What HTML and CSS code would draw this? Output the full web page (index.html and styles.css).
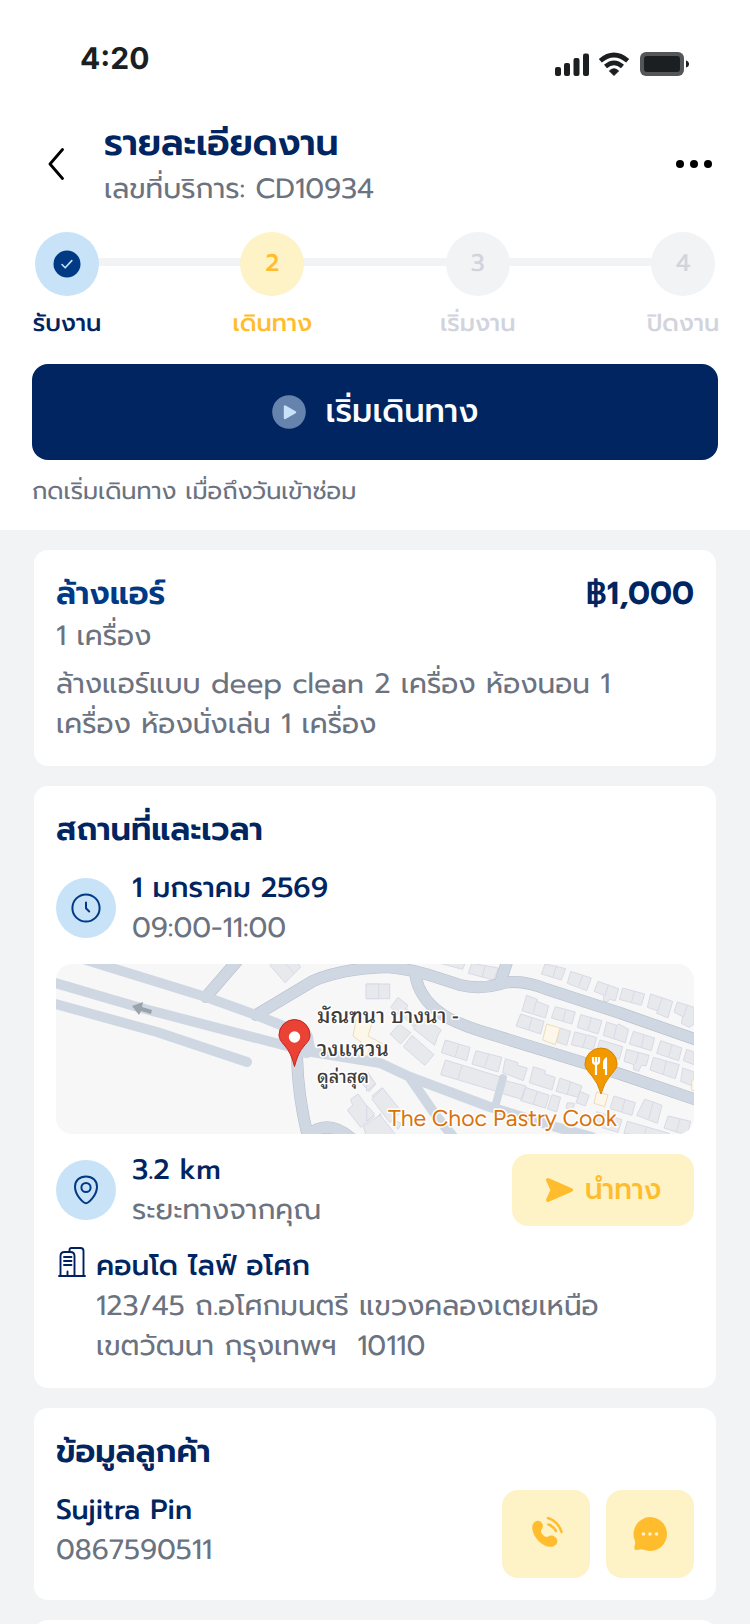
FILE: index.html
```html
<!DOCTYPE html>
<html lang="th">
<head>
<meta charset="utf-8">
<meta name="viewport" content="width=device-width, initial-scale=1">
<title>รายละเอียดงาน</title>
<link rel="stylesheet" href="styles.css">
</head>
<body>
<div class="top">
  <div class="status">
    <span class="time">4:20</span>
    <svg class="status-icons" viewBox="0 0 136 28" aria-hidden="true">
      <g fill="#1b1f21">
        <rect x="1" y="15" width="6" height="9" rx="2"/><rect x="10" y="11" width="6" height="13" rx="2"/>
        <rect x="19.500" y="6" width="6" height="18" rx="2"/><rect x="29" y="1.500" width="6" height="22.500" rx="2"/>
        <path d="M54.500 24l-4.600-4.600q4.600-4.200 9.200 0z" stroke="#1b1f21" stroke-linejoin="round" transform="translate(5.500 -.5)"/>
      </g>
      <g fill="none" stroke="#1b1f21" stroke-width="4.600">
        <path d="M46.300 8.800q13.700-11.600 27.400 0" stroke-linejoin="round"/><path d="M51.500 14.500q8.500-7.200 17 0"/>
      </g>
      <rect x="86" y="0" width="44" height="24" rx="6" fill="#545759"/>
      <rect x="90" y="4" width="36" height="16" rx="3" fill="#1b1f21"/>
      <path d="M132 8.500q3 1 3 3.500t-3 3.500z" fill="#1b1f21"/>
    </svg>
  </div>

  <header class="header">
    <button class="icon-button" aria-label="ย้อนกลับ">
      <svg width="16" height="32" viewBox="0 0 16 32" fill="none" stroke="#000" stroke-width="2.800" stroke-linecap="round" stroke-linejoin="round"><path d="M14.500 1.500L2 16l12.500 14.500"/></svg>
    </button>
    <div class="heading">
      <h1>รายละเอียดงาน</h1>
      <p class="muted">เลขที่บริการ: CD10934</p>
    </div>
    <button class="icon-button" aria-label="เพิ่มเติม">
      <svg width="36" height="8" viewBox="0 0 36 8"><circle cx="4" cy="4" r="4"/><circle cx="18" cy="4" r="4"/><circle cx="32" cy="4" r="4"/></svg>
    </button>
  </header>

  <ol class="steps">
    <li class="step done">
      <span class="dot"><svg width="28" height="28" viewBox="0 0 28 28"><circle cx="14" cy="14" r="13.500" fill="#003a85"/><path d="M9 14.500l3.200 3.300 6.600-7.200" fill="none" stroke="#c8e2f8" stroke-width="1.600" stroke-linecap="round" stroke-linejoin="round"/></svg></span>
      <span class="label">รับงาน</span>
    </li>
    <li class="step current"><span class="dot">2</span><span class="label">เดินทาง</span></li>
    <li class="step"><span class="dot">3</span><span class="label">เริ่มงาน</span></li>
    <li class="step"><span class="dot">4</span><span class="label">ปิดงาน</span></li>
  </ol>

  <button class="primary">
    <svg width="34" height="34" viewBox="0 0 34 34"><circle cx="17" cy="17" r="16.800" fill="#6683ae"/><path d="M13 11.500v11.500l10-5.750z" fill="#c8e2f8" stroke="#c8e2f8" stroke-width="2.400" stroke-linejoin="round"/></svg>
    <span>เริ่มเดินทาง</span>
  </button>
  <p class="hint">กดเริ่มเดินทาง เมื่อถึงวันเข้าซ่อม</p>
</div>

<main class="cards">
  <section class="card">
    <div class="split">
      <h2 class="service">ล้างแอร์</h2>
      <span class="price">฿1,000</span>
    </div>
    <p class="muted">1 เครื่อง</p>
    <p class="muted detail">ล้างแอร์แบบ deep clean 2 เครื่อง ห้องนอน 1<br>เครื่อง ห้องนั่งเล่น 1 เครื่อง</p>
  </section>

  <section class="card stack">
    <h2>สถานที่และเวลา</h2>
    <div class="row">
      <span class="badge"><svg width="30" height="30" viewBox="0 0 30 30" fill="none" stroke="#003a85" stroke-width="2" stroke-linecap="round" stroke-linejoin="round"><circle cx="15" cy="15" r="13.600"/><path d="M15 9.500v5.700l3.200 3.300"/></svg></span>
      <div class="grow"><p class="strong">1 มกราคม 2569</p><p class="muted">09:00-11:00</p></div>
    </div>

    <svg class="map" viewBox="0 0 638 170" preserveAspectRatio="xMidYMid slice" role="img" aria-label="แผนที่">
      <rect width="638" height="170" fill="#f7f7f7"/>
      <g fill="#e8e9ed" stroke="#d8d9e6" stroke-width="3">
        <g transform="translate(-16 -14) scale(.33333)">
          <path d="M690 46l45 52 47-46-14-20h-66zM735 40l27 30M980 102h38v44h-38zM985 368l22 35-20 22-25-30zM932 448l22-16 50 68-42 32-40-52 16-14zM996 438l30-25v60zM982 530l40-40v70h-30z"/>
        </g>
        <g transform="translate(314 -14) scale(.33333)">
          <path d="M-12 102h71v44h-71zM26 102v44M210 40l68 18 8-20zM305 40l80 14-14 36-76-20zM345 48l-8 32"/>
          <path d="M525 42l62 14-13 34-60-18zM560 46l-11 35M602 64l62 20-14 38-58-22zM638 76l-12 32M684 94l62 22-10 36-18-4-6 8-12-4 2-16-30-12zM715 104l-10 34M758 114l66 18-10 34-66-18zM794 124l-10 34M842 132l66 22-14 50-34-14 2-8-30-10zM877 143l-14 40M922 156l50 16v50l-14 10-24-12 4-20-26-14zM952 166l-12 36"/>
          <path d="M470 136l32 12-2 6 36 14-10 36-70-22zM500 150l-10 38M556 170l60 16-10 36-62-18zM588 178l-10 36M632 194l64 18-12 40-62-20zM664 204l-10 36M710 216l30 10 6-4 30 16-10 40-66-22zM740 226l-8 38M790 244l64 20-10 38-66-20zM822 256l-8 38M872 272l64 22-10 38-66-22zM906 284l-10 36M950 298l22 8v38l-32-12z"/>
          <path d="M452 192l70 22-10 38-74-24zM486 204l-10 36M570 234l32 10-12 42-30-10zM614 246l66 16-10 38-66-16zM648 258l-10 36M690 270l68 20-10 38-70-22zM770 298l68 18-10 32-14-2-8 18-16-6 2-14-30-10zM806 308l-10 34M850 322l78 22-12 42-76-26zM888 334l-8 40M938 354l34 12v44l-40-16z"/>
          <path d="M84 142l30 24-20 34-32-28zM110 176l40 32-20 22-30-30zM158 200l56 40-10 16-10 30-64-50zM88 222l34 26-30 34-32-30zM126 256l66 58-28 32-64-56zM226 270l74 22-10 40-76-24zM266 284l-10 34M318 302l78 20-12 44-78-24zM356 314l-12 36M406 326l38 12-2 8 30 8-12 38-62-24z"/>
          <path d="M226 330l170 52-10 44-174-52zM276 346l-12 42M406 392l62 16-12 40-62-18zM466 412l72 24-12 38-74-22zM502 424l-12 38M546 434l26 8-12 44-28-10zM490 350l36 12-2 10 32 10-10 38-68-22zM570 384l66 24-12 34-66-18zM602 396l-10 36M630 424l28 12-12 32-28-10zM592 458l22 2-6 18-20-4z"/>
          <path d="M732 438l64 20-10 38-66-20zM765 448l-10 38M824 448l26 8 26 10-14 54-62-24zM850 456l-14 50M894 498l68 16-10 42-70-22zM930 508l-10 36M772 514l126 36-6 20-130-20zM830 532l-8 24M680 485l76 24-12 38-70-20zM38 414l56 70-34 34-54-70zM-10 370l26 30-26 24zM-20 530l50-35 48 60h-90zM-10 466l24 26-24 22zM70 510l24 10-10 18z"/>
          <g fill="#fdf7ea" stroke="#ecdcbc"><path d="M530 222l40 12-14 50-38-14zM680 426l34 8-10 36-32-10zM965 390h12v34l-12-4z"/></g>
        </g>
        <path d="M300 56l-3 16 8 6-6 16 10 4 5-15 12 6 3-8-17-9 4-13z" fill="#fdf7ea" stroke="#ecdcbc" stroke-width="1"/>
      </g>
      <g fill="none" stroke-linecap="round" stroke-linejoin="round">
        <path stroke="#b9bfcb" d="M150 33L181-3M200 51l57-34Q284 5 330 3C360 5 385 15 404 21Q424 26 444 20T490 25L564 49l80 28M444 19l8-24M359 9Q363 38 394 55Q410 63 431 69L561 109l80 27M241 93q1 40 11 80M251 172q20-18 44 2" stroke-width="12"/>
        <g stroke="#cfd8e2">
          <path d="M150 33L181-3M200 51l57-34Q284 5 330 3C360 5 385 15 404 21Q424 26 444 20T490 25L564 49l80 28M444 19l8-24M359 9Q363 38 394 55Q410 63 431 69L561 109l80 27M241 93q1 40 11 80M251 172q20-18 44 2" stroke-width="10.800"/>
          <path d="M30-4L150 33l50 18 50 20M-4 18L85 44l165 43 74 12 30 14 80 30 66 20 36 10M-4 39l105 29 90 30M354 114l27 39 18 22" stroke-width="10"/>
          <path d="M439 143l8-29" stroke-width="8"/>
          <path d="M248 73l2 12" stroke-width="18"/>
        </g>
      </g>
      <path d="M76 42l11-4-1 5 10 3-1 4-10-3-2 4z" fill="#9aa2aa"/>
      <path d="M238.500 102.500q-3.500-14-9.500-20.500c-4.500-5-6-8-6-11a15.500 15.500 0 0 1 31 0c0 4-1.500 6-6 11q-6 6.500-9.500 20.500z" fill="#ea4335" stroke="#c5221f"/>
      <circle cx="238.500" cy="73" r="5.700" fill="#fff"/>
      <path d="M545 130q-3-11-9-18c-5-6-7-8-7-12a16 16 0 0 1 32 0c0 4-2 6-7 12q-6 7-9 18z" fill="#f29900" stroke="#d98200"/>
      <path d="M537 93v4q0 3 3 3t3-3v-4M540 93v18M550 111V94" fill="none" stroke="#fff" stroke-width="2.200"/><path d="M551 93v12h-4v-7q1-4 4-5z" fill="#fff"/>
      <g class="map-text">
        <text x="261" y="59">มัณฑนา บางนา -</text>
        <text x="261" y="92">วงแหวน</text>
        <text class="map-small" x="261" y="119">ดูล่าสุด</text>
        <text class="map-shop" x="332" y="162">The Choc Pastry Cook</text>
      </g>
    </svg>

    <div class="row">
      <span class="badge"><svg width="26" height="30" viewBox="0 0 26 30" fill="none" stroke="#003a85" stroke-width="2"><path d="M13 28.300c-2.500 0-11-8-11-16.500C2 5.500 6.500 1.500 13 1.500s11 4 11 10.300c0 8.500-8.500 16.500-11 16.500z"/><circle cx="13" cy="12.500" r="4.600"/></svg></span>
      <div class="grow"><p class="strong">3.2 km</p><p class="muted">ระยะทางจากคุณ</p></div>
      <button class="soft navigate">
        <svg width="28" height="26" viewBox="0 0 28 26"><path d="M3 3l23 10L3 23l4.500-10z" fill="#ffbd2e" stroke="#ffbd2e" stroke-width="4" stroke-linejoin="round"/></svg>
        <span>นำทาง</span>
      </button>
    </div>

    <div class="address">
      <svg width="30" height="32" viewBox="0 0 30 32" fill="none" stroke="#00205f" stroke-width="1.900" stroke-linecap="round" stroke-linejoin="round"><path d="M3 30h26M4.500 30V10q0-4 4-4h6q4 0 4 4v20M13.500 6V4q0-2 2-2h9q3 0 3 3v25M11.500 30v-4.500M8 11h7.500M8 15h7.500M8 19h7.500"/></svg>
      <div class="grow"><p class="strong">คอนโด ไลฟ์ อโศก</p><p class="muted">123/45 ถ.อโศกมนตรี แขวงคลองเตยเหนือ<br>เขตวัฒนา กรุงเทพฯ&nbsp; 10110</p></div>
    </div>
  </section>

  <section class="card stack">
    <h2>ข้อมูลลูกค้า</h2>
    <div class="contact">
      <div class="grow"><p class="strong">Sujitra Pin</p><p class="muted">0867590511</p></div>
      <button class="soft square" aria-label="โทร">
        <svg width="34" height="34" viewBox="0 0 34 34"><path d="M4 7c3-5 8-3.500 9.500 0 1.500 4-1.500 5-1.500 7.500 0 2 3.500 5.500 5.500 5.500 2 0 3.500-2.500 7-1 4.500 2 5 6.500 2 9-4.500 4-12 1-16.500-3.500C5.500 20 1.500 12 4 7z" fill="#ffbd2e"/><path d="M19 1c6 1.500 11.500 7 13.500 14M19.500 7.500q4.500 1.500 7.500 6.500" fill="none" stroke="#ffbd2e" stroke-width="2.500" stroke-linecap="round"/></svg>
      </button>
      <button class="soft square" aria-label="แชท">
        <svg width="34" height="34" viewBox="0 0 34 34"><path d="M17 0a17 17 0 1 1-7 32.500q-2-.5-5 .3c-3 .7-4-.5-3.600-3l.8-3.500q.3-1-.5-3A17 17 0 0 1 17 0z" fill="#ffbd2e"/><g fill="#fef2c7"><circle cx="10.500" cy="17" r="1.800"/><circle cx="17" cy="17" r="1.800"/><circle cx="23.500" cy="17" r="1.800"/></g></svg>
      </button>
    </div>
  </section>
  <section class="card stub"></section>
</main>
</body>
</html>
```
FILE: styles.css
```css
* { box-sizing: border-box; }
html { height: 100%; overflow: hidden; background: #f2f3f5; }
body {
  margin: 0;
  height: 100%;
  overflow: hidden;
  color: #002561;
  font-family: Prompt, "Noto Sans", "Noto Sans Thai", sans-serif;
  font-size: 28px;
  line-height: 40px;
  text-rendering: geometricPrecision;
}
h1, h2, p, ol { margin: 0; padding: 0; }
button { border: 0; margin: 0; padding: 0; font: inherit; color: inherit; background: none; cursor: pointer; }
svg { display: block; flex: none; }

.top { background: #fff; padding: 0 32px 18px; }
.status { display: flex; justify-content: space-between; align-items: flex-start; height: 120px; padding: 39px 28px 0 48px; }
.time { font-family: Inter, sans-serif; font-weight: 700; font-size: 30px; color: #1b1f21; }
.status-icons { width: 136px; height: 28px; margin-top: 13px; }

.header { display: flex; align-items: center; gap: 24px; height: 88px; }
.icon-button { display: grid; place-items: center; min-width: 48px; height: 48px; }
.icon-button:last-child { min-width: 36px; margin-right: 6px; }
.heading { flex: 1; }
h1 { font-size: 36px; font-weight: 600; line-height: 50px; }
.muted { color: #6b7280; }
.strong { font-weight: 500; }

.steps {
  display: flex; justify-content: space-between;
  list-style: none; height: 132px; padding-top: 24px;
  background: linear-gradient(#f2f3f5, #f2f3f5) center 50px / calc(100% - 72px) 8px no-repeat;
}
.step { display: flex; flex-direction: column; align-items: center; gap: 8px; width: 70px; font-size: 24px; font-weight: 500; color: #d2d4dd; white-space: nowrap; }
.dot { display: grid; place-items: center; flex: none; width: 64px; height: 64px; border-radius: 50%; background: #f2f3f5; }
.done { color: #002561; }
.done .dot { background: #c8e2f8; }
.current { color: #ffbd2e; }
.current .dot { background: #fef2c7; }

.primary {
  display: flex; align-items: center; justify-content: center; gap: 20px;
  width: 100%; height: 96px; margin-top: 24px;
  border-radius: 16px; background: #002561; color: #fff;
  font-size: 32px; font-weight: 500;
}
.hint { margin-top: 12px; font-size: 24px; line-height: 40px; color: #6b7280; }

.cards { display: flex; flex-direction: column; gap: 20px; padding: 20px 34px 0; }
.card { padding: 22px; border-radius: 14px; background: #fff; }
.stub { height: 80px; flex: none; }
.stack { display: flex; flex-direction: column; gap: 16px; }
h2, .price { font-size: 32px; font-weight: 600; line-height: 44px; }
.service { color: #003a85; }
.split { display: flex; justify-content: space-between; }
.detail { margin-top: 8px; }

.row { display: flex; align-items: center; gap: 16px; }
.grow { flex: 1; min-width: 0; }
.badge { display: grid; place-items: center; width: 60px; height: 60px; border-radius: 50%; background: #c8e2f8; }
.map { width: 100%; height: 170px; border-radius: 16px; }
.map-text { font-family: "Noto Sans Thai Looped", "Noto Looped Thai", Sarabun, Loma, Garuda, "Noto Sans", sans-serif; fill: #3c3c3c; font-size: 21px; font-weight: 500; stroke: #fff; stroke-width: 3px; paint-order: stroke; stroke-linejoin: round; }
.map-small { font-size: 18px; }
.map-shop { font-family: "Google Sans", "Product Sans", Figtree, Outfit, Lato, sans-serif; font-size: 23px; font-weight: 400; fill: #d9730d; }

.soft { display: flex; align-items: center; justify-content: center; border-radius: 16px; background: #fef2c7; color: #ffbd2e; font-weight: 500; }
.navigate { gap: 12px; width: 182px; height: 72px; }
.square { width: 88px; height: 88px; }
.address { display: flex; gap: 10px; }
.contact { display: flex; gap: 16px; }
```
